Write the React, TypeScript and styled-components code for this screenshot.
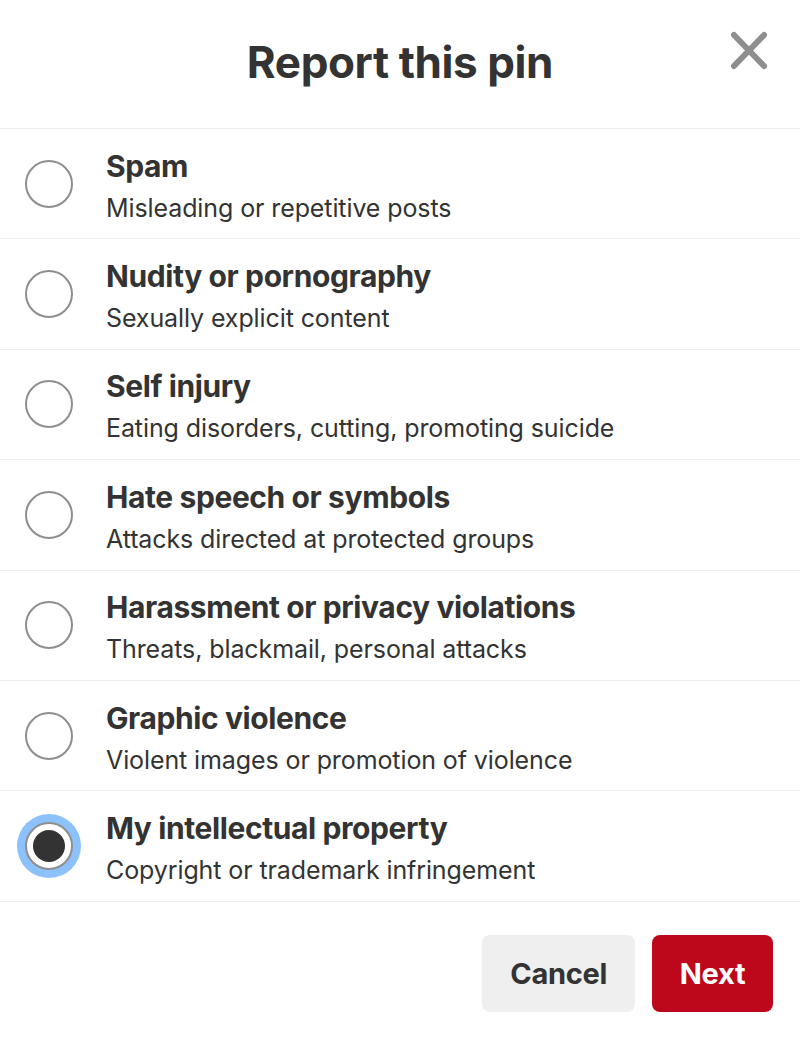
import React, { useState } from "react";
import styled, { createGlobalStyle } from "styled-components";

const Global = createGlobalStyle`
  html, body { margin: 0; padding: 0; background: #fff; }
  body { font-family: Inter, "Helvetica Neue", Arial, sans-serif; color: #333; -webkit-font-smoothing: antialiased; }
`;

const Page = styled.div`
  width: 800px;
  height: 1041px;
  display: flex;
  flex-direction: column;
  background: #fff;
`;

const Header = styled.header`
  position: relative;
  height: 129px;
  display: flex;
  align-items: center;
  justify-content: center;
  border-bottom: 1px solid #efefef;
  box-sizing: border-box;
`;

const Title = styled.h1`
  margin: 0;
  font-size: 44px;
  font-weight: 700;
  letter-spacing: -0.4px;
  color: #333;
  margin-top: -4px;
`;

const CloseButton = styled.button`
  position: absolute;
  right: 30px;
  top: 30px;
  width: 42px;
  height: 42px;
  border: none;
  background: transparent;
  padding: 0;
  display: flex;
  align-items: center;
  justify-content: center;
`;

const List = styled.div`
  display: flex;
  flex-direction: column;
`;

const Row = styled.label`
  height: 110.4px;
  box-sizing: border-box;
  border-bottom: 1px solid #efefef;
  display: flex;
  align-items: center;
  cursor: pointer;
`;

const RadioSlot = styled.div`
  width: 106px;
  flex: none;
  display: flex;
  align-items: center;
  justify-content: center;
  padding-right: 8px;
  box-sizing: border-box;
`;

const Radio = styled.div<{ $checked: boolean }>`
  width: 48px;
  height: 48px;
  border-radius: 50%;
  box-sizing: border-box;
  border: 2px solid #8e8e8e;
  background: #fff;
  display: flex;
  align-items: center;
  justify-content: center;
  box-shadow: ${(p) => (p.$checked ? "0 0 0 8px #8dc1fc" : "none")};
  &::after {
    content: "";
    display: ${(p) => (p.$checked ? "block" : "none")};
    width: 32px;
    height: 32px;
    border-radius: 50%;
    background: #333;
  }
`;

const TextCol = styled.div`
  display: flex;
  flex-direction: column;
  gap: 8px;
  padding-top: 4px;
`;

const ItemTitle = styled.div`
  font-size: 30px;
  font-weight: 700;
  letter-spacing: -0.4px;
  color: #333;
  line-height: 36px;
`;

const ItemDesc = styled.div`
  font-size: 25px;
  font-weight: 400;
  color: #333;
  letter-spacing: -0.1px;
  line-height: 32px;
`;

const Footer = styled.footer`
  display: flex;
  justify-content: flex-end;
  gap: 17px;
  padding: 33px 27px 0 0;
`;

const Button = styled.button<{ $primary?: boolean }>`
  height: 77px;
  padding: 0 ${(p) => (p.$primary ? "27px" : "28px")};
  border: none;
  border-radius: 8px;
  font-family: inherit;
  font-size: 29px;
  font-weight: 700;
  letter-spacing: -0.3px;
  background: ${(p) => (p.$primary ? "#bd081c" : "#efefef")};
  color: ${(p) => (p.$primary ? "#fff" : "#333")};
  min-width: ${(p) => (p.$primary ? "121px" : "152px")};
`;

const items = [
  ["Spam", "Misleading or repetitive posts"],
  ["Nudity or pornography", "Sexually explicit content"],
  ["Self injury", "Eating disorders, cutting, promoting suicide"],
  ["Hate speech or symbols", "Attacks directed at protected groups"],
  ["Harassment or privacy violations", "Threats, blackmail, personal attacks"],
  ["Graphic violence", "Violent images or promotion of violence"],
  ["My intellectual property", "Copyright or trademark infringement"],
];

export default function App() {
  const [sel, setSel] = useState(6);
  return (
    <>
      <Global />
      <Page>
        <Header>
          <Title>Report this pin</Title>
          <CloseButton aria-label="Close">
            <svg width="42" height="42" viewBox="0 0 42 42">
              <path d="M6 5 L36 36 M36 5 L6 36" stroke="#8e8e8e" strokeWidth="6" strokeLinecap="round" />
            </svg>
          </CloseButton>
        </Header>
        <List>
          {items.map(([t, d], i) => (
            <Row key={t} onClick={() => setSel(i)}>
              <RadioSlot>
                <Radio $checked={sel === i} />
              </RadioSlot>
              <TextCol>
                <ItemTitle>{t}</ItemTitle>
                <ItemDesc>{d}</ItemDesc>
              </TextCol>
            </Row>
          ))}
        </List>
        <Footer>
          <Button>Cancel</Button>
          <Button $primary>Next</Button>
        </Footer>
      </Page>
    </>
  );
}
